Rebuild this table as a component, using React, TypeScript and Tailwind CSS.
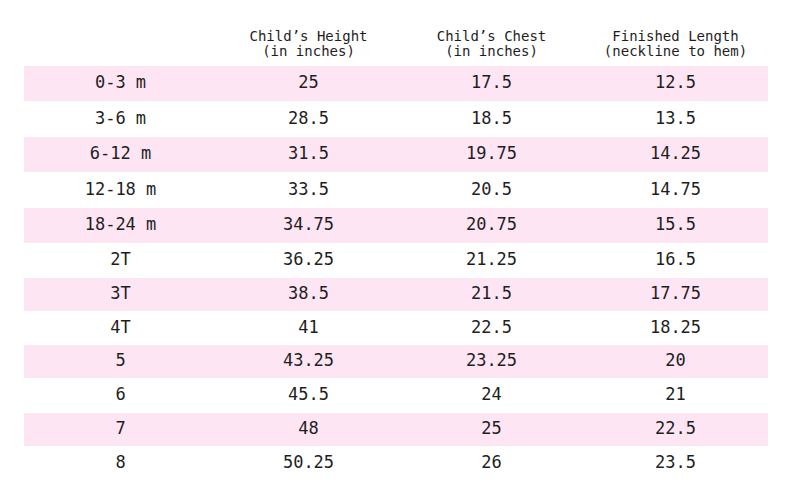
import React from "react";

const rows: { h: string; cells: [string, string, string, string] }[] = [
  { h: "h-[35px]", cells: ["0-3 m", "25", "17.5", "12.5"] },
  { h: "h-[36px]", cells: ["3-6 m", "28.5", "18.5", "13.5"] },
  { h: "h-[35px]", cells: ["6-12 m", "31.5", "19.75", "14.25"] },
  { h: "h-[36px]", cells: ["12-18 m", "33.5", "20.5", "14.75"] },
  { h: "h-[35px]", cells: ["18-24 m", "34.75", "20.75", "15.5"] },
  { h: "h-[35px]", cells: ["2T", "36.25", "21.25", "16.5"] },
  { h: "h-[33px]", cells: ["3T", "38.5", "21.5", "17.75"] },
  { h: "h-[34px]", cells: ["4T", "41", "22.5", "18.25"] },
  { h: "h-[33px]", cells: ["5", "43.25", "23.25", "20"] },
  { h: "h-[35px]", cells: ["6", "45.5", "24", "21"] },
  { h: "h-[33px]", cells: ["7", "48", "25", "22.5"] },
  { h: "h-[34px]", cells: ["8", "50.25", "26", "23.5"] },
];

const cols = "grid grid-cols-[193px_183px_183px_185px]";

export default function App() {
  return (
    <div
      className="w-[794px] h-[498px] bg-white text-[#1e1e1e] pt-[29px] pl-[24px]"
      style={{ fontFamily: '"DejaVu Sans Mono", monospace' }}
    >
      <div className={`${cols} w-[744px] h-[30px] mb-[7px] text-[14px] leading-[15px]`}>
        <div />
        <div className="text-center whitespace-pre">{"Child’s Height\n(in inches)"}</div>
        <div className="text-center whitespace-pre">{"Child’s Chest\n(in inches)"}</div>
        <div className="text-center whitespace-pre">{"Finished Length\n(neckline to hem)"}</div>
      </div>
      <div className="flex flex-col w-[744px]">
        {rows.map((r, i) => (
          <div
            key={i}
            className={`${cols} ${r.h} items-center text-[17px] leading-none ${
              i % 2 === 0 ? "bg-[#fde5f4]" : "bg-white"
            }`}
          >
            {r.cells.map((c, j) => (
              <div key={j} className="text-center whitespace-pre -translate-y-[1px]">
                {c}
              </div>
            ))}
          </div>
        ))}
      </div>
    </div>
  );
}
